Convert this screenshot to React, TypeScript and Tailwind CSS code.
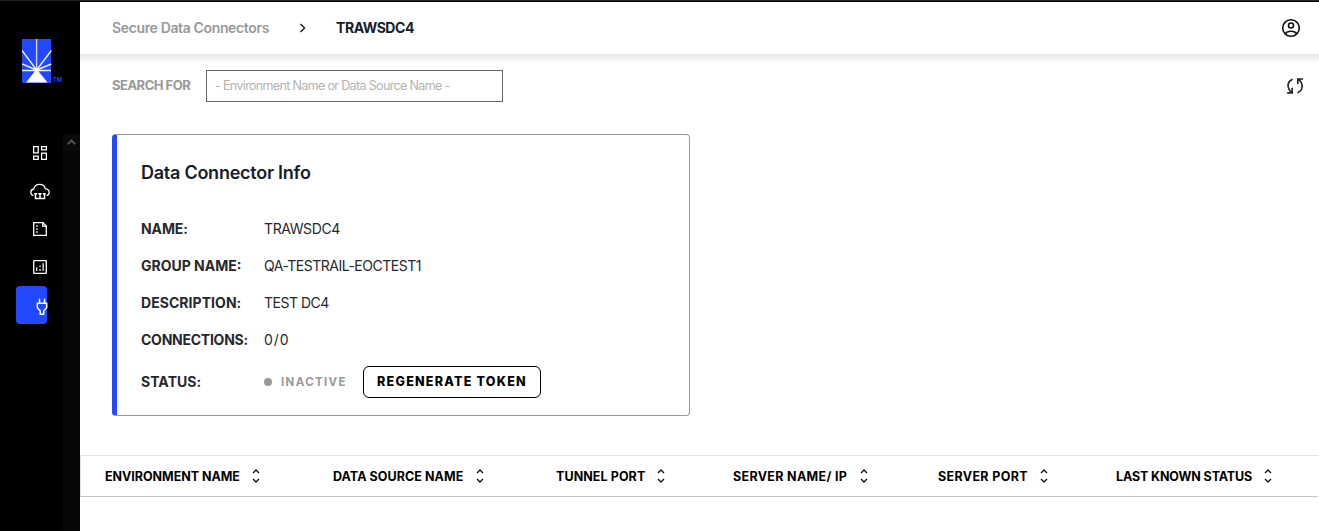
import React from "react";

function Logo() {
  return (
    <svg width="42" height="46" viewBox="0 0 42 46" className="block">
      <rect x="0" y="0" width="29" height="44" fill="#2249ff" />
      <g stroke="#fff" strokeOpacity="0.9" strokeWidth="1.4" fill="none">
        <path d="M14.6 31V0" strokeWidth="1.4" strokeOpacity="0.75" />
        <path d="M14.6 31L0 11.5M14.6 31L29.4 11.5M14.6 31L0 25M14.6 31L29.4 25M0 31.5H29" />
      </g>
      <circle cx="14.6" cy="31" r="2.2" fill="#fff" />
      <path d="M14.6 30L25.5 43.4H4L14.6 30Z" fill="#fff" />
      <text x="31" y="43.4" fontSize="5.6" fontWeight="600" fill="#2249ff" fontFamily="Inter, sans-serif">
        TM
      </text>
    </svg>
  );
}

function DashboardIcon() {
  return (
    <svg width="14" height="14" viewBox="0 0 14 14" fill="none" stroke="#fff" strokeWidth="1.3">
      <path d="M.6.6h4.6v6.2H.6zM8.6.6h4.8v3.2H8.6zM.6 10.2h4.6v3.2H.6zM8.6 7.2h4.8v6.2H8.6z" />
    </svg>
  );
}

function CloudIcon() {
  return (
    <svg width="20" height="18" viewBox="0 0 20 18" fill="none" stroke="#fff" strokeWidth="1.3">
      <path d="M3.4 12.6C1.6 12 .8 10.8.8 9.3c0-1.8 1.3-3 3-3.3C4.3 3 6.7 1.3 9.6 1.3c2.9 0 5.2 1.7 5.7 4.5 2.2.1 3.9 1.4 3.9 3.5 0 1.7-1 2.9-2.6 3.3" />
      <path d="M4.2 10.7h3M8.3 10.7h3.2M12.7 10.7h3M5.5 11v4.4h9V11M10 11v4.4" strokeWidth="1.5" />
    </svg>
  );
}

function NoteIcon() {
  return (
    <svg width="14" height="14" viewBox="0 0 14 14" fill="none" stroke="#fff" strokeWidth="1.3">
      <path d="M.7.7h9.2l3.4 3.4v9.2H.7z" />
      <path d="M9.7.6v3.6h3.6" />
      <path d="M3.2 4h1.500M3.2 7h1.500M3.2 10h1.500" />
    </svg>
  );
}

function ChartIcon() {
  return (
    <svg width="14" height="14" viewBox="0 0 14 14" fill="none" stroke="#fff" strokeWidth="1.3">
      <rect x=".7" y=".7" width="12.6" height="12.6" rx=".6" />
      <path d="M3.7 7.2V11M10.2 3.2V11M7 5.5v1.6M7 8.7V11" strokeWidth="1.4" strokeOpacity=".85" />
    </svg>
  );
}

function PlugIcon() {
  return (
    <svg width="12" height="18" viewBox="0 0 12 18" fill="none" stroke="#fff" strokeWidth="1.5">
      <path d="M3.5.8v4M8.5.8v4M1.3 5.2h9.4v4.6L7.7 13v3.3H4.3V13L1.3 9.8z" />
    </svg>
  );
}

function UserIcon() {
  return (
    <svg width="20" height="20" viewBox="0 0 20 20" fill="none" stroke="#111" strokeWidth="1.6">
      <circle cx="10" cy="10" r="8.3" />
      <circle cx="10" cy="7.5" r="2.5" />
      <path d="M4.2 15.7C5.5 14 7.6 13.3 10 13.3s4.5.7 5.8 2.4" />
    </svg>
  );
}

function RefreshIcon() {
  return (
    <svg width="18" height="18" viewBox="0 0 18 18" fill="none" stroke="#222" strokeWidth="1.6">
      <path d="M6.5 2.3C3 4 1.7 6.6 2.1 9.5c.2 2.3 1.4 4.3 3.5 6.3M1.2 15.9h5v-5.1" />
      <path d="M11.5 15.8c3.2-1.4 4.9-4.2 4.7-7.2-.2-2.4-1.4-4.3-3.6-6.400M17 2H11.8v5" />
    </svg>
  );
}

function SortIcon() {
  return (
    <svg width="8" height="14" viewBox="0 0 8 14" fill="none" stroke="#111" strokeWidth="1.4" className="block shrink-0">
      <path d="M1 4L4 1l3 3M1 10l3 3 3-3" />
    </svg>
  );
}

function Sidebar() {
  return (
    <aside className="flex w-20 shrink-0 flex-col bg-black">
      <div className="h-[132px] pt-[37px] pl-[22px]">
        <Logo />
      </div>
      <div className="flex flex-1 justify-between">
        <nav className="flex w-[63px] flex-col">
          <a className="flex h-[38px] items-center pl-[33px]"><DashboardIcon /></a>
          <a className="flex h-[38px] items-center pl-[30px] pt-px"><CloudIcon /></a>
          <a className="flex h-[38px] items-center pl-[33px]"><NoteIcon /></a>
          <a className="flex h-[38px] items-center pl-[33px]"><ChartIcon /></a>
          <a className="ml-4 flex h-[38px] w-[31px] items-center rounded-[4px] bg-[#2249ff] pt-[3px] pl-5">
            <span className="shrink-0"><PlugIcon /></span>
          </a>
        </nav>
        <div className="w-[17px] bg-[#060608]">
          <div className="flex h-[17px] items-center justify-center bg-[#0a0a0d] pb-[2px]">
            <svg width="9" height="6" viewBox="0 0 9 6" fill="none" stroke="#505052" strokeWidth="2">
              <path d="M.7 5.3L4.5 1.5l3.8 3.8" />
            </svg>
          </div>
        </div>
      </div>
    </aside>
  );
}

function InfoRow({ label, spacing, children }: { label: string; spacing: string; children: React.ReactNode }) {
  return (
    <div className="flex h-[37px] items-center text-[14px] text-[#27272c]">
      <div className={`w-[123px] shrink-0 font-bold whitespace-nowrap ${spacing}`}>{label}</div>
      {children}
    </div>
  );
}

const columns = [
  { label: "ENVIRONMENT NAME", width: "w-[228px]", text: "w-[147px] tracking-[-0.04px]" },
  { label: "DATA SOURCE NAME", width: "w-[223px]", text: "w-[143px] tracking-[0.06px]" },
  { label: "TUNNEL PORT", width: "w-[177px]", text: "w-[101px] tracking-[0.08px]" },
  { label: "SERVER NAME/ IP", width: "w-[205px]", text: "w-[127px] tracking-[0.32px]" },
  { label: "SERVER PORT", width: "w-[178px]", text: "w-[102px] tracking-[0.34px]" },
  { label: "LAST KNOWN STATUS", width: "w-[180px]", text: "w-[148px] tracking-[-0.13px]" },
];

export default function App() {
  return (
    <div className="flex h-[531px] w-[1319px] flex-col overflow-hidden bg-white font-['Inter',sans-serif]">
      <div className="h-[2px] shrink-0 border-b border-black bg-[#25242e]" />
      <div className="flex min-h-0 flex-1">
        <Sidebar />
        <main className="flex min-w-0 flex-1 flex-col">
          <header className="flex h-[52px] shrink-0 items-center pr-[18px] pl-8 text-[14px] font-semibold">
            <span className="w-[187px] pb-[2px] tracking-[-0.36px] whitespace-nowrap text-[#999]">Secure Data Connectors</span>
            <svg width="7" height="10" viewBox="0 0 7 10" fill="none" stroke="#222" strokeWidth="1.5">
              <path d="M1.5 1L5.5 5l-4 4" />
            </svg>
            <span className="ml-[30px] pb-[2px] font-bold tracking-[-0.45px] text-[#181b28]">TRAWSDC4</span>
            <span className="ml-auto"><UserIcon /></span>
          </header>
          <div className="h-[10px] shrink-0 bg-gradient-to-b from-[#e7e7e7] to-white" />
          <div className="flex h-[44px] shrink-0 items-center pr-[15px] pl-8">
            <label className="w-[94px] text-[13px] font-bold tracking-[-0.5px] whitespace-nowrap text-[#999]">SEARCH FOR</label>
            <input
              className="h-8 w-[297px] border border-[#666] px-2 pb-px text-[12.5px] tracking-[-0.65px] placeholder:text-[#b3b3b3] focus:outline-none"
              placeholder="- Environment Name or Data Source Name -"
            />
            <span className="ml-auto"><RefreshIcon /></span>
          </div>
          <section className="mt-[26px] ml-8 h-[282px] w-[578px] shrink-0 rounded-[4px] border border-l-[5px] border-[#999] border-l-[#2249ff] pl-6">
            <h2 className="mt-[25px] h-[26px] text-[18px] leading-[26px] font-semibold tracking-[-0.25px] text-[#181b28]">Data Connector Info</h2>
            <div className="mt-[24px]">
              <InfoRow label="NAME:" spacing="tracking-[-0.1px]">
                <span className="tracking-[-0.4px]">TRAWSDC4</span>
              </InfoRow>
              <InfoRow label="GROUP NAME:" spacing="tracking-[0px]">
                <span className="tracking-[-0.5px]">QA-TESTRAIL-EOCTEST1</span>
              </InfoRow>
              <InfoRow label="DESCRIPTION:" spacing="tracking-[0.05px]">
                <span className="tracking-[-0.5px]">TEST DC4</span>
              </InfoRow>
              <InfoRow label="CONNECTIONS:" spacing="tracking-[-0.25px]">
                <span className="tracking-[0.9px]">0/0</span>
              </InfoRow>
              <div className="pt-[5px]">
                <InfoRow label="STATUS:" spacing="tracking-[0.05px]">
                  <span className="size-2 rounded-full bg-[#999]" />
                  <span className="ml-[9px] w-[82px] pt-[3px] text-[11.5px] font-bold tracking-[1.35px] text-[#999]">INACTIVE</span>
                  <button className="h-8 w-[178px] rounded-[6px] border border-black pt-[2px] text-[12.5px] font-extrabold tracking-[1.25px] whitespace-nowrap text-black">
                    REGENERATE TOKEN
                  </button>
                </InfoRow>
              </div>
            </div>
          </section>
          <div className="mt-[39px] flex h-[42px] w-[1238px] shrink-0 items-center border border-r-0 border-t-[#e5e3de] border-b-[#c4c4c4] border-l-[#e5e3de] pl-6">
            {columns.map((c) => (
              <div key={c.label} className={`flex shrink-0 items-center ${c.width}`}>
                <span className={`pt-[2px] text-[12.5px] font-bold whitespace-nowrap text-black ${c.text}`}>{c.label}</span>
                <SortIcon />
              </div>
            ))}
          </div>
        </main>
      </div>
    </div>
  );
}
